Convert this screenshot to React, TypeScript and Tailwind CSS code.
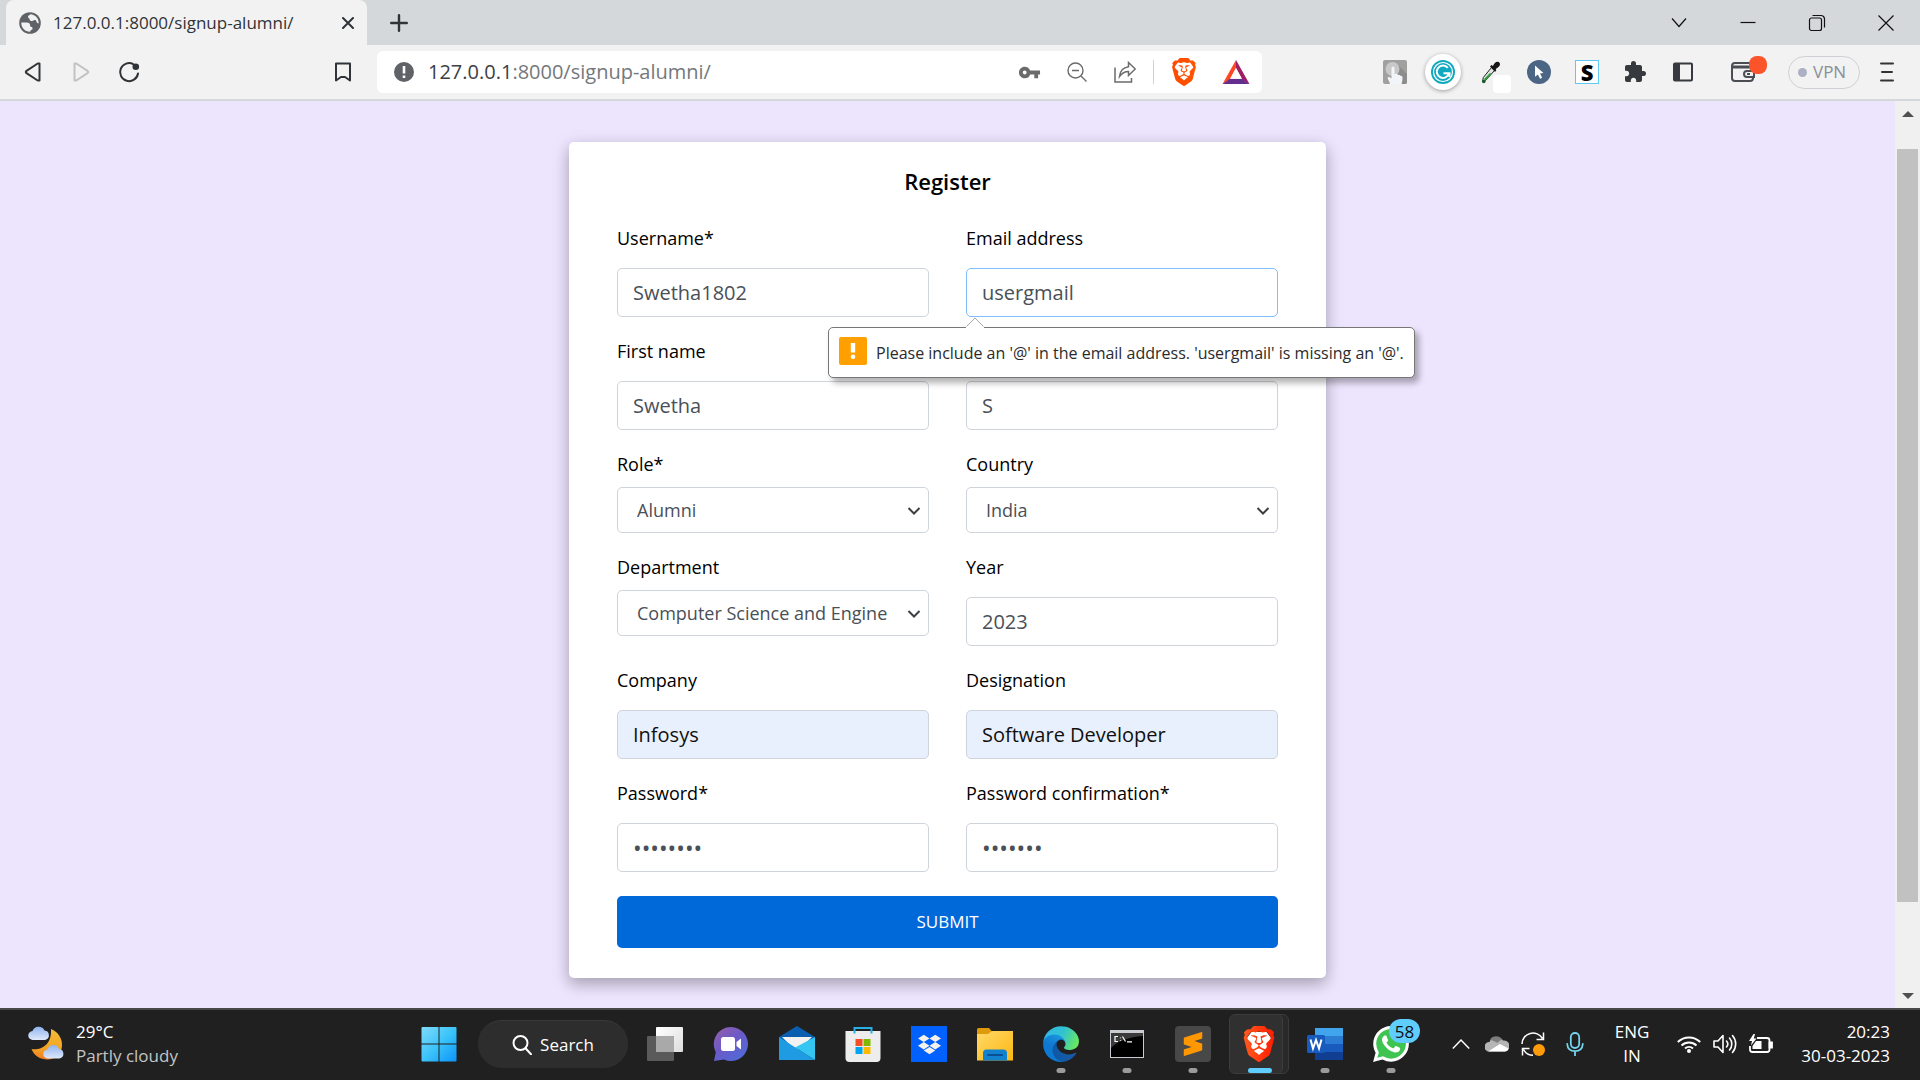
import React from 'react';
import { MdExtension, MdVpnKey } from 'react-icons/md';
import { SiBrave, SiDropbox, SiSublimetext, SiWhatsapp } from 'react-icons/si';

type FieldProps = {
  id: string;
  label?: string;
  value: string;
  type?: string;
  tone?: 'normal' | 'focused' | 'autofill';
  children?: React.ReactNode;
};

const tones = {
  normal: 'border-[#ced4da] bg-white text-[#495057]',
  focused: 'border-[#80bdff] bg-white text-[#495057]',
  autofill: 'border-[#ced4da] bg-[#e8f0fe] text-[#101010]',
};

function Field({ id, label, value, type = 'text', tone = 'normal', children }: FieldProps) {
  return (
    <div className="flex min-w-0 flex-col justify-end">
      {label && <label htmlFor={id} className="block text-[18px] leading-7 text-black">{label}</label>}
      <div className="relative mt-4">
        <input
          id={id}
          type={type}
          defaultValue={value}
          aria-label={label ? undefined : 'Last name'}
          className={`block h-[49px] w-full rounded-[5px] border px-[15px] leading-7 outline-none ${type === 'password' ? 'text-[23px]' : 'text-[20px]'} ${tones[tone]}`}
        />
        {children}
      </div>
    </div>
  );
}

function SelectField({ id, label, value }: { id: string; label: string; value: string }) {
  return (
    <div className="min-w-0">
      <label htmlFor={id} className="block text-[18px] leading-7 text-black">{label}</label>
      <div className="relative mt-[9px]">
        <select
          id={id}
          defaultValue={value}
          className="block h-[46px] w-full appearance-none rounded-[5px] border border-[#ced4da] bg-white pl-[19px] pr-10 text-[18px] leading-7 text-[#495057] outline-none"
        >
          <option>{value}</option>
        </select>
        <svg className="pointer-events-none absolute right-2 top-5 h-2 w-[14px]" viewBox="0 0 14 8" fill="none" stroke="#3b4045" strokeWidth="2">
          <path d="M1.5 1l5.5 5.5L12.5 1" />
        </svg>
      </div>
    </div>
  );
}

function ValidationTip() {
  return (
    <div className="absolute -left-[138px] top-full z-10 mt-[10px] w-[587px]" role="alert">
      <div className="flex h-[51px] items-center rounded-[5px] border border-[#777] bg-white pl-[10px] pr-2 shadow-[4px_5px_6px_rgba(0,0,0,0.3)]">
        <svg className="mb-1 h-7 w-7 shrink-0" viewBox="0 0 28 28">
          <rect width="28" height="28" rx="2" fill="#ffa000" />
          <rect x="11.800" y="6" width="4.400" height="9.500" fill="#fff" />
          <circle cx="14" cy="19.800" r="2.300" fill="#fff" />
        </svg>
        <span className="ml-[9px] whitespace-nowrap text-[16px] leading-6 text-[#2b2b2b]">
          Please include an '@' in the email address. 'usergmail' is missing an '@'.
        </span>
      </div>
      <svg className="absolute -top-[10px] left-[138px] h-[11px] w-[18px]" viewBox="0 0 18 11">
        <path d="M0 10L9 1l9 9v1H0z" fill="#fff" />
        <path d="M0.500 9.500L9 1l8.500 8.500" fill="none" stroke="#a8a8a8" />
      </svg>
    </div>
  );
}

/* ---------- browser chrome ---------- */

function WindowButton({ label, children }: { label: string; children: React.ReactNode }) {
  return (
    <button aria-label={label} className="flex h-full w-[69px] items-center justify-center">
      <svg className="h-4 w-4 overflow-visible" viewBox="0 0 16 16" fill="none" stroke="#111" strokeWidth="1.200">{children}</svg>
    </button>
  );
}

function ToolButton({ label, children }: { label: string; children: React.ReactNode }) {
  return (
    <button aria-label={label} className="flex h-full w-12 shrink-0 items-center justify-center">{children}</button>
  );
}

function BraveLion({ id, size, from, to }: { id: string; size: string; from: string; to: string }) {
  return (
    <svg className={size} viewBox="0 0 24 24">
      <defs>
        <linearGradient id={id} x1="0" y1="0" x2="1" y2="0">
          <stop offset="0" stopColor={from} />
          <stop offset="1" stopColor={to} />
        </linearGradient>
      </defs>
      <path d="M7 4h10l3 4-3 10-5 4-5-4L4 8z" fill="#fff" />
      <SiBrave size={24} fill={`url(#${id})`} />
    </svg>
  );
}

function TabStrip() {
  return (
    <header className="flex h-[45px] items-center bg-[#d4d8db] pl-1.5">
      <div className="flex h-full w-[361px] items-center rounded-t-lg bg-[#f2f2f2] pl-[13px] pr-2">
        <svg className="h-[22px] w-[22px] shrink-0" viewBox="0 0 22 22">
          <circle cx="11" cy="11" r="10.800" fill="#5f6368" />
          <path d="M2.300 10.500h5.200c2.600 0 3.600 1.200 3.600 3 0 1.200 1 1.700 2.300 1.700v2.200c-1.200.1-2 .8-2.200 2.300C6 19.800 2.200 15.800 2.300 10.500z" fill="#f2f2f2" />
          <path d="M11.300 2.200c-.7 1.200-1.900 1-2.300 2.400-.3 1.500 1.500 1.500 1.700 2.900.2 1.600 2.600 2 3.600.9 1-.9 2.900-.6 3.100.8.200 1.300 1 2.200 2.300 2.300C20 6.500 16.500 2.500 11.300 2.200z" fill="#f2f2f2" />
        </svg>
        <span className="ml-3 whitespace-nowrap text-[17px] leading-6 text-[#303438]">127.0.0.1:8000/signup-alumni/</span>
        <button aria-label="Close tab" className="ml-auto flex h-6 w-[22px] items-center justify-center">
          <svg className="h-3 w-3" viewBox="0 0 12 12" stroke="#303438" strokeWidth="2" strokeLinecap="round"><path d="M1 1l10 10M11 1L1 11" /></svg>
        </button>
      </div>
      <button aria-label="New tab" className="ml-4 flex h-8 w-8 items-center justify-center">
        <svg className="h-[18px] w-[18px]" viewBox="0 0 18 18" stroke="#303438" strokeWidth="2.400" strokeLinecap="round"><path d="M9 1.200v15.600M1.200 9h15.600" /></svg>
      </button>
      <div className="ml-auto flex h-full">
        <WindowButton label="Search tabs"><path d="M1 3.500l7 8 7-8" /></WindowButton>
        <WindowButton label="Minimize"><path d="M0.500 7.500h15" /></WindowButton>
        <WindowButton label="Restore"><rect x="0.500" y="3" width="12" height="12.500" rx="2" /><path d="M3.500 0.500H12a3.500 3.500 0 0 1 3.500 3.500v8.500" /></WindowButton>
        <WindowButton label="Close"><path d="M0.500 0.500l15 15M15.500 0.500l-15 15" /></WindowButton>
      </div>
    </header>
  );
}

function Toolbar() {
  return (
    <nav className="flex h-14 items-center border-b-2 border-[#d4d8db] bg-[#f2f2f2] pl-[9px] pr-[21px]">
      <ToolButton label="Back">
        <svg className="h-5 w-5" viewBox="0 0 20 20" fill="none" stroke="#303438" strokeWidth="2" strokeLinejoin="round"><path d="M16.500 1.500v17h-1.800L3.500 11.200a1.400 1.400 0 0 1 0-2.400L14.700 1.500z" /></svg>
      </ToolButton>
      <ToolButton label="Forward">
        <svg className="h-5 w-5" viewBox="0 0 20 20" fill="none" stroke="#c0c2c4" strokeWidth="2" strokeLinejoin="round"><path d="M3.500 1.500v17h1.800l11.200-7.300a1.400 1.400 0 0 0 0-2.400L5.300 1.500z" /></svg>
      </ToolButton>
      <ToolButton label="Reload">
        <svg className="h-[22px] w-[22px]" viewBox="0 0 22 22" fill="none" stroke="#303438" strokeWidth="2" strokeLinecap="round"><path d="M15.500 3.300A9 9 0 1 0 20 12.500" /><circle cx="17.800" cy="5.800" r="3.300" fill="#303438" stroke="none" /></svg>
      </ToolButton>
      <div className="ml-[166px] h-full">
        <ToolButton label="Bookmark">
          <svg className="h-5 w-4" viewBox="0 0 16 20" fill="none" stroke="#303438" strokeWidth="2" strokeLinejoin="round"><path d="M1 1.500h14v17l-5-3.500h-4L1 18.500z" /></svg>
        </ToolButton>
      </div>

      <div className="ml-[10px] mr-[109px] flex h-[42px] min-w-0 flex-1 items-center rounded-md bg-white pl-[17px]">
        <svg className="h-5 w-5 shrink-0" viewBox="0 0 20 20"><circle cx="10" cy="10" r="10" fill="#5f6368" /><rect x="8.700" y="4" width="2.600" height="7.500" fill="#fff" /><rect x="8.700" y="13.500" width="2.600" height="2.500" fill="#fff" /></svg>
        <div className="ml-3.5 min-w-0 flex-1 whitespace-nowrap text-[20px] leading-7 text-[#74787c]">
          <span className="text-[#3c4043]">127.0.0.1</span>:8000/signup-alumni/
        </div>
        <ToolButton label="Passwords"><MdVpnKey className="h-[23px] w-[23px]" color="#6b6b6b" /></ToolButton>
        <ToolButton label="Zoom out">
          <svg className="h-5 w-5" viewBox="0 0 20 20" fill="none" stroke="#6b6b6b" strokeWidth="1.400"><circle cx="8.500" cy="8.500" r="7.500" /><path d="M5 8.500h7M14 14l5.500 5.500" /></svg>
        </ToolButton>
        <ToolButton label="Share">
          <svg className="h-[22px] w-[22px]" viewBox="0 0 22 22" fill="none" stroke="#6b6b6b" strokeWidth="1.500"><path d="M1 6.500V21h16.500v-4" /><path d="M14.500 1.500L21.300 8l-6.800 6.500v-4c-4 0-6.500 1.500-9 5 .5-5.500 3.500-9 9-9.800z" /></svg>
        </ToolButton>
        <span className="mx-1 h-6 w-px bg-[#cfd1d4]" />
        <button aria-label="Brave Shields" className="flex h-full w-[52px] items-center justify-center">
          <BraveLion id="lion-bar" size="h-7 w-7" from="#ff4a00" to="#ff5500" />
        </button>
        <button aria-label="Brave Rewards" className="flex h-full w-[52px] items-center justify-center">
          <svg className="h-6 w-7" viewBox="0 0 28 24">
            <path d="M14 0L0.500 24l7.500-4.500L14 8z" fill="#ff4724" />
            <path d="M14 0l13.500 24-7.500-4.500L14 8z" fill="#9e1f63" />
            <path d="M0.500 24h27L20 18.800H8z" fill="#662d91" />
            <path d="M14 8l6 10.800H8z" fill="#fff" />
          </svg>
        </button>
      </div>

      <ToolButton label="Touch extension">
        <svg className="h-6 w-6" viewBox="0 0 24 24">
          <rect width="24" height="24" rx="2" fill="#a0a0a0" />
          <path d="M14 4l10 10v8a2 2 0 0 1-2 2H8z" fill="#8c8c8c" />
          <circle cx="9.500" cy="9" r="7" fill="#c8c8c8" />
          <path d="M8.500 8a1.500 1.500 0 0 1 3 0v6c2-.5 3 .2 3.500 1 1-.5 2 0 2.300.8 1-.3 2.200.2 2.200 1.500 0 3-.3 4.700-1 6.700H7c-.4-2.500-2-4-2.500-6.500 1-1 2.500-.5 4 1z" fill="#f1f5fa" />
        </svg>
      </ToolButton>
      <ToolButton label="Grammarly">
        <span className="flex h-9 w-9 items-center justify-center rounded-full bg-white shadow-[0_1px_4px_rgba(0,0,0,0.35)]">
          <svg className="h-6 w-6" viewBox="0 0 24 24" fill="none">
            <circle cx="12" cy="12" r="12" fill="#11a9c0" />
            <circle cx="12" cy="12" r="9.500" stroke="#fff" strokeWidth="1.200" />
            <path d="M16.800 7.800A6.200 6.200 0 1 0 18 13.200M12.500 13.200H18.500v3.800" stroke="#fff" strokeWidth="2" />
          </svg>
        </span>
      </ToolButton>
      <ToolButton label="Color picker">
        <span className="relative block h-6 w-6">
          <svg className="ml-0.5 h-6 w-5" viewBox="0 0 20 24">
            <path d="M10.500 7.500l3 3-8.500 9.500-3.500 2 .8-4.500z" fill="#dfe8df" stroke="#222" strokeWidth="1" />
            <path d="M9 13l1.500.8-5.500 6.400-2 .8.500-2.500z" fill="#2e9e3a" />
            <circle cx="2.800" cy="21.500" r="1.800" fill="#1c5b2a" />
            <path d="M9 6.500l1.500-1.500 1.500 1c1-2.500 2.500-4.300 4.500-4.300 2.200 0 3 2 2.200 3.800-.8 1.500-2.500 2.500-4 3.500l.6 1.300-1.300 1.700z" fill="#161616" />
          </svg>
          <span className="absolute -bottom-[9px] -right-2 h-[18px] w-[18px] rounded-sm bg-white" />
        </span>
      </ToolButton>
      <ToolButton label="Cursor extension">
        <svg className="h-6 w-6" viewBox="0 0 24 24"><circle cx="12" cy="12" r="12" fill="#4b6584" /><path d="M8 5.500l8.500 7.500-3.500.4 2.200 4.300-2.200 1.100-2.100-4.400L8 16.700z" fill="#fff" /></svg>
      </ToolButton>
      <ToolButton label="S extension">
        <span className="flex h-6 w-6 items-center justify-center border border-[#5fc9f3] bg-white text-[22px] font-extrabold leading-none text-black">S</span>
      </ToolButton>
      <ToolButton label="Extensions"><MdExtension className="h-6 w-6" color="#36393d" /></ToolButton>
      <ToolButton label="Side panel">
        <svg className="h-5 w-5" viewBox="0 0 20 20"><rect x="1" y="1.500" width="18" height="17" rx="1" fill="none" stroke="#36393d" strokeWidth="2" /><path d="M1 1h6v18H1z" fill="#36393d" /></svg>
      </ToolButton>
      <button aria-label="Wallet" className="relative ml-[21px] flex h-full w-[30px] shrink-0 items-center justify-center">
        <svg className="h-[22px] w-6" viewBox="0 0 24 22" fill="none" stroke="#4a4d52" strokeWidth="2"><rect x="1" y="2" width="21" height="18" rx="3" /><path d="M1 6h21" strokeWidth="3" /><path d="M23 10h-7a3 3 0 0 0 0 6h7z" fill="#f2f2f2" /><path d="M16 13h3" /></svg>
        <span className="absolute -right-[9px] top-[11px] h-[18px] w-[18px] rounded-lg bg-[#fb542b]" />
      </button>
      <button className="ml-[30px] flex h-[33px] w-[72px] shrink-0 items-center rounded-full border border-[#cdd0d5] pl-[9px] text-[17px] leading-6 text-[#8a8f98]">
        <span className="mr-1.5 h-[9px] w-[9px] rounded-full bg-[#adafc4]" />VPN
      </button>
      <button aria-label="Menu" className="ml-[15px] flex h-full w-6 shrink-0 items-center justify-center">
        <svg className="h-5 w-[14px]" viewBox="0 0 14 20" stroke="#303438" strokeWidth="2" strokeLinecap="round"><path d="M1 1.500h12M2 10h10M1 18.500h12" /></svg>
      </button>
    </nav>
  );
}

function Scrollbar() {
  return (
    <div className="flex w-[25px] shrink-0 flex-col items-center bg-[#f0f0f0]">
      <span className="flex h-[25px] items-center justify-center"><svg className="h-1.5 w-3" viewBox="0 0 12 6"><path d="M6 0l6 6H0z" fill="#505050" /></svg></span>
      <span className="mb-[81px] mt-[23px] w-[21px] flex-1 bg-[#c1c1c1]" />
      <span className="flex h-[25px] items-center justify-center"><svg className="h-1.5 w-3" viewBox="0 0 12 6"><path d="M6 6l6-6H0z" fill="#505050" /></svg></span>
    </div>
  );
}

/* ---------- taskbar ---------- */

function WeatherIcon() {
  return (
    <svg className="h-9 w-[38px]" viewBox="0 0 38 36">
      <defs>
        <linearGradient id="moon" x1="0" y1="0" x2="0" y2="1"><stop offset="0" stopColor="#f2bd3b" /><stop offset="0.600" stopColor="#f5a623" /><stop offset="1" stopColor="#ef7d22" /></linearGradient>
        <linearGradient id="cloud" x1="0" y1="0" x2="0" y2="1"><stop offset="0" stopColor="#8fb4ef" /><stop offset="1" stopColor="#dfe9fa" /></linearGradient>
      </defs>
      <path d="M23 3c7 3 11.500 9 11 17-.6 8-7 13.500-14.500 13.500C12 33.500 6 29.500 3.500 23 12 24.500 24 20 23 3z" fill="url(#moon)" />
      <path d="M5 14a4.500 4.500 0 0 1-.5-9A6.500 6.500 0 0 1 16.500 4.500a4.800 4.800 0 0 1 .5 9.500z" fill="url(#cloud)" />
      <path d="M20 32.500a4.500 4.500 0 0 1-.5-9A6 6 0 0 1 31 23a4.800 4.800 0 0 1 .5 9.500z" fill="url(#cloud)" />
    </svg>
  );
}

function TaskIcon({ label, running, children }: { label: string; running?: boolean; children: React.ReactNode }) {
  return (
    <button aria-label={label} className="relative flex h-full w-[66px] shrink-0 items-center justify-center">
      {children}
      {running && <span className="absolute bottom-[5px] left-1/2 h-[5px] w-[9px] -translate-x-1/2 rounded-full bg-[#9b9b9b]" />}
    </button>
  );
}

function TaskIcons() {
  return (
    <>
      <TaskIcon label="Task view">
        <svg className="h-9 w-9" viewBox="0 0 36 36"><defs><linearGradient id="tv" x1="0" y1="0" x2="1" y2="1"><stop offset="0" stopColor="#fff" /><stop offset="1" stopColor="#ddd" /></linearGradient></defs><rect x="9" y="1" width="27" height="25" rx="1" fill="url(#tv)" /><rect y="10" width="27" height="25" rx="1" fill="#5a5a5a" /><path d="M9 10h17a1 1 0 0 1 1 1v15H9z" fill="#a9a9a9" /></svg>
      </TaskIcon>
      <TaskIcon label="Chat">
        <svg className="h-9 w-9" viewBox="0 0 36 36"><defs><linearGradient id="chat" x1="0" y1="0" x2="0.800" y2="1"><stop offset="0" stopColor="#9a5fa8" /><stop offset="0.500" stopColor="#6a5ac8" /><stop offset="1" stopColor="#4f6bd8" /></linearGradient></defs><path d="M18 1a17 17 0 1 1-7 32.500L1 35l1.800-9A17 17 0 0 1 18 1z" fill="url(#chat)" /><rect x="8" y="11" width="14" height="14" rx="2.500" fill="#fff" /><path d="M23.500 16l4.500-3.500v11L23.500 20z" fill="#fff" /></svg>
      </TaskIcon>
      <TaskIcon label="Mail">
        <svg className="h-9 w-9" viewBox="0 0 36 36"><path d="M0 11L18 0l18 11v6H0z" fill="#0a5eb0" /><path d="M3 11h30l-12 12h-6z" fill="#f2f2f2" /><path d="M36 11v23L16 21.500z" fill="#35c5f1" /><path d="M0 34V11l36 23z" fill="#1f9be4" /></svg>
      </TaskIcon>
      <TaskIcon label="Microsoft Store">
        <svg className="h-9 w-9" viewBox="0 0 36 36"><path d="M.500 5h35v27a4 4 0 0 1-4 4h-27a4 4 0 0 1-4-4z" fill="#ededed" /><path d="M9.500 7.500V2h17v5.500" fill="none" stroke="#27b0e6" strokeWidth="2" /><path d="M10.500 13h7v7h-7z" fill="#f25022" /><path d="M18.500 13h7v7h-7z" fill="#7fba00" /><path d="M10.500 21h7v7h-7z" fill="#00a4ef" /><path d="M18.500 21h7v7h-7z" fill="#ffb900" /></svg>
      </TaskIcon>
      <TaskIcon label="Dropbox">
        <span className="flex h-9 w-9 items-center justify-center bg-[#0061ff]"><SiDropbox className="h-[23px] w-[23px]" color="#f5f2ee" /></span>
      </TaskIcon>
      <TaskIcon label="File Explorer">
        <svg className="h-9 w-9" viewBox="0 0 36 36"><defs><linearGradient id="fold" x1="0" y1="0" x2="1" y2="1"><stop offset="0" stopColor="#ffd869" /><stop offset="1" stopColor="#fdb813" /></linearGradient></defs><path d="M0 3.500A1.500 1.500 0 0 1 1.500 2H12l3 3.500V12H0z" fill="#dd9b0b" /><path d="M0 8h11l4-3h21v29.500H0z" fill="url(#fold)" /><path d="M6 34.500V27a3.500 3.500 0 0 1 3.500-3.500h17A3.500 3.500 0 0 1 30 27v7.500z" fill="#1282cf" /><path d="M11 29h14" stroke="#0a4f94" strokeWidth="2" strokeLinecap="round" /></svg>
      </TaskIcon>
      <TaskIcon label="Edge" running>
        <svg className="h-9 w-9" viewBox="4 4 257 257">
          <defs>
            <linearGradient id="e1" x1="0" y1="0" x2="1" y2="0"><stop offset="0" stopColor="#0c59a4" /><stop offset="1" stopColor="#1a5aa8" /></linearGradient>
            <linearGradient id="e2" x1="0.700" y1="0" x2="0.300" y2="1"><stop offset="0" stopColor="#1b9de2" /><stop offset="0.500" stopColor="#0f78d0" /><stop offset="1" stopColor="#0b7ad6" /></linearGradient>
            <linearGradient id="e3" x1="0" y1="0.300" x2="1" y2="0.600"><stop offset="0" stopColor="#33b6e6" /><stop offset="0.500" stopColor="#30c3d2" /><stop offset="1" stopColor="#6ae85c" /></linearGradient>
          </defs>
          <path d="M235.680 195.460a93.730 93.730 0 0 1-10.540 4.710 101.870 101.870 0 0 1-35.900 6.460c-47.320 0-88.540-32.550-88.540-74.320A31.480 31.480 0 0 1 117.130 105c-42.800 1.800-53.800 46.400-53.800 72.530 0 73.880 68.090 81.370 82.760 81.370 7.910 0 19.840-2.300 27-4.560l1.310-.440a128.340 128.340 0 0 0 66.600-52.800 4 4 0 0 0-5.320-5.640Z" fill="url(#e1)" />
          <path d="M110.340 246.340A79.200 79.200 0 0 1 87.600 225a80.720 80.720 0 0 1 29.530-120c3.120-1.470 8.450-4.130 15.540-4a32.350 32.350 0 0 1 25.690 13 31.880 31.880 0 0 1 6.360 18.660c0-.210 24.460-79.600-80-79.600-43.900 0-80 41.660-80 78.210a130.150 130.150 0 0 0 12.110 56 128 128 0 0 0 156.380 67.110 75.550 75.550 0 0 1-62.780-8Z" fill="url(#e2)" />
          <path d="M156.940 153.780c-.810 1.050-3.300 2.500-3.300 5.660 0 2.610 1.700 5.120 4.720 7.230 14.380 10 41.490 8.680 41.560 8.680a59.560 59.560 0 0 0 30.270-8.350 61.380 61.380 0 0 0 30.430-52.880c.260-22.410-8-37.310-11.340-43.910C228.090 28.760 182.350 4.920 132.610 4.920a128 128 0 0 0-128 126.200c.480-36.540 36.800-66.050 80-66.050 3.500 0 23.460.340 42 10.070 16.340 8.580 24.900 18.940 30.850 29.210 6.180 10.670 7.280 24.150 7.280 29.520s-2.740 13.330-7.800 19.910Z" fill="url(#e3)" />
        </svg>
      </TaskIcon>
      <TaskIcon label="Command Prompt" running>
        <span className="relative block h-7 w-[34px] border border-[#c9cdd2] border-t-[3px] bg-black">
          <svg className="absolute inset-0 h-full w-full" viewBox="0 0 32 24" fill="none"><path d="M0 0h32v3C16 4 6 9 0 15z" fill="#3a3a3a" /><path d="M7 3.500H4v5h3M9.500 4.500v.8M9.500 7v.8M11.500 3.500l3 5M16 8.800h5" stroke="#fff" strokeWidth="1.200" /></svg>
        </span>
      </TaskIcon>
      <TaskIcon label="Sublime Text" running>
        <span className="flex h-9 w-9 items-center justify-center rounded-sm bg-[#484848]"><SiSublimetext className="h-6 w-6" color="#ff9800" /></span>
      </TaskIcon>
      <button aria-label="Brave" className="relative flex h-full w-[66px] shrink-0 items-center">
        <span className="absolute left-2 top-1 h-[60px] w-[55px] rounded-md border border-[#3a3a3a] bg-[#292929]" />
        <span className="relative ml-[3px] flex h-[60px] w-[54px] items-center justify-center rounded-md border border-[#3c3c3c] bg-[#303030] pl-1.5">
          <BraveLion id="lion-task" size="h-9 w-9" from="#ff5a1f" to="#ff1c00" />
          <span className="absolute bottom-0 right-2.5 h-[5px] w-6 rounded-full bg-[#60cdff]" />
        </span>
      </button>
      <TaskIcon label="Word" running>
        <svg className="h-9 w-9" viewBox="0 0 36 36"><path d="M8 2h28v8H8z" fill="#41a5ee" /><path d="M8 10h28v8H8z" fill="#2b7cd3" /><path d="M8 18h28v8H8z" fill="#185abd" /><path d="M8 26h28v8H8z" fill="#103f91" /><rect y="9" width="18" height="18" rx="1.500" fill="#185abd" /><path d="M3.500 13.500l2.500 9 3-8.500 3 8.500 2.500-9" fill="none" stroke="#fff" strokeWidth="2" /></svg>
      </TaskIcon>
      <TaskIcon label="WhatsApp" running>
        <svg className="h-9 w-9" viewBox="0 0 24 24"><path d="M12 1a11 11 0 1 1-5.500 20.500L1 23l1.500-5.500A11 11 0 0 1 12 1z" fill="#3fc351" /><SiWhatsapp size={24} color="#fff" /></svg>
        <span className="absolute right-1 top-[9px] flex h-6 w-[31px] items-center justify-center rounded-full bg-[#60cdff] text-[17px] leading-none text-[#101010]">58</span>
      </TaskIcon>
    </>
  );
}

function TrayCell({ width = 'w-9', children }: { width?: string; children: React.ReactNode }) {
  return <span className={`flex h-full shrink-0 items-center justify-center ${width}`}>{children}</span>;
}

function Taskbar() {
  return (
    <footer className="flex h-[72px] items-center border-t-2 border-[#48484a] bg-[#202020] pb-0.5 pr-[30px] text-[17px] leading-6 text-white">
      <div className="flex w-[406px] shrink-0 items-center pl-7">
        <WeatherIcon />
        <div className="ml-2.5"><div>29°C</div><div className="text-[#c4c4c4]">Partly cloudy</div></div>
      </div>
      <button aria-label="Start" className="flex h-full w-[66px] shrink-0 items-center justify-center">
        <svg className="h-9 w-9" viewBox="0 0 36 36"><defs><linearGradient id="win" gradientUnits="userSpaceOnUse" x1="0" y1="0" x2="36" y2="36"><stop offset="0" stopColor="#84dcfb" /><stop offset="0.500" stopColor="#3cc4fa" /><stop offset="1" stopColor="#0a93f8" /></linearGradient></defs><path d="M.500 2a1 1 0 0 1 1-1H17.500v16.500H.500zM18.500 1H34.500a1 1 0 0 1 1 1v15.500H18.500zM.500 18.500H17.500V35.500h-16a1 1 0 0 1-1-1zM18.500 18.500h17V34.500a1 1 0 0 1-1 1H18.500z" fill="url(#win)" /></svg>
      </button>
      <button className="ml-1.5 mr-1 flex h-12 w-[150px] shrink-0 items-center justify-center rounded-full border-t border-[#393939] bg-[#2d2d2d] text-white">
        <svg className="mr-2 h-5 w-5" viewBox="0 0 20 20" fill="none" stroke="#fff" strokeWidth="2" strokeLinecap="round"><circle cx="8.500" cy="8" r="7" /><path d="M13.500 13.200l5.500 6" /></svg>
        Search
      </button>
      <TaskIcons />

      <div className="ml-auto flex h-full items-center">
        <TrayCell><svg className="h-3 w-[18px]" viewBox="0 0 18 12" fill="none" stroke="#fff" strokeWidth="1.500"><path d="M.800 10.500L9 2l8.200 8.500" /></svg></TrayCell>
        <TrayCell><svg className="h-4 w-6" viewBox="0 0 24 16"><path d="M4 15.500A4.500 4.500 0 0 1 4.500 6 7.500 7.500 0 0 1 18 4.500a5.500 5.500 0 0 1 2 11z" fill="#b5b5b5" /><path d="M5 3.500C8-.500 14-1 17.500 3.800c-2 .2-3 1-5 3z" fill="#7d7d7d" /><path d="M3 15.500l12-7.500 8.500 4.500c-.5 2-1.500 3-4 3z" fill="#fff" /></svg></TrayCell>
        <TrayCell>
          <svg className="h-6 w-6" viewBox="0 0 24 24" fill="none" stroke="#fff" strokeWidth="1.500"><path d="M1 12A11 11 0 0 1 21.500 6.500M22.500.500V7.500H15.500M12 23.200A11 11 0 0 1 2.500 17.500M1.500 23.500V16.500H8.500" /><circle cx="18" cy="18" r="6" fill="#ff9a0a" stroke="none" /></svg>
        </TrayCell>
        <TrayCell width="w-12"><svg className="h-6 w-[18px]" viewBox="0 0 18 24" fill="none" stroke="#76d3ee" strokeWidth="1.800" strokeLinecap="round"><rect x="4.800" y="1" width="8.400" height="15" rx="4.200" /><path d="M1.200 12c.4 4.800 3.400 7.200 7.800 7.200s7.400-2.400 7.800-7.200M9 19.500V23.500" /></svg></TrayCell>
        <TrayCell width="w-[66px]"><span className="text-center">ENG<br />IN</span></TrayCell>
        <span className="w-1.5" />
        <TrayCell><svg className="h-[18px] w-6" viewBox="0 0 24 18" fill="none" stroke="#fff" strokeWidth="2"><path d="M.800 7a16 16 0 0 1 22.400 0M4.500 10.500a11 11 0 0 1 15 0M8 13.500a6 6 0 0 1 8 0" /><circle cx="12" cy="16" r="2" fill="#fff" stroke="none" /></svg></TrayCell>
        <TrayCell><svg className="h-5 w-6" viewBox="0 0 24 20" fill="none" stroke="#fff" strokeWidth="1.600" strokeLinejoin="round" strokeLinecap="round"><path d="M1 7h4l5-5.500v17L5 13H1z" /><path d="M13.500 7a4.500 4.500 0 0 1 0 6M16.500 4a9 9 0 0 1 0 12M19.500 1.500a13 13 0 0 1 0 17" /></svg></TrayCell>
        <TrayCell><svg className="h-5 w-6" viewBox="0 0 24 20" fill="none" stroke="#fff" strokeWidth="1.800"><path d="M8 4h10a2.500 2.500 0 0 1 2.500 2.500v9A2.500 2.500 0 0 1 18 18H3.500A2.500 2.500 0 0 1 1 15.500V12" /><path d="M20.500 8.500h2.500v5h-2.500z" fill="#fff" /><path d="M7 7h5.500v8H3.500v-3z" fill="#fff" stroke="none" /><path d="M4.500 0L0 7h3l-1 4.500L7.500 4.500H4.800L6 0z" fill="#fff" stroke="none" /></svg></TrayCell>
        <div className="w-[111px] text-right">20:23<br />30-03-2023</div>
      </div>
    </footer>
  );
}

export default function App() {
  return (
    <div className="flex min-h-screen flex-col font-['Open_Sans','Noto_Sans',sans-serif]">
      <TabStrip />
      <Toolbar />
      <div className="flex flex-1">
        <main className="min-w-0 flex-1 bg-[#ede4fd] px-6 pb-[30px] pt-[41px]">
          <form
            onSubmit={(e) => e.preventDefault()}
            noValidate
            className="mx-auto max-w-[757px] rounded-[5px] bg-white px-12 pb-[30px] pt-6 shadow-[0_6px_14px_rgba(0,0,0,0.18),0_5px_19px_rgba(0,0,0,0.15)]"
          >
            <h1 className="mb-7 text-center text-[22px] font-semibold leading-[30px] text-black">Register</h1>
            <div className="grid grid-cols-2 gap-x-[37px] gap-y-5">
              <Field id="username" label="Username*" value="Swetha1802" />
              <Field id="email" label="Email address" value="usergmail" type="email" tone="focused"><ValidationTip /></Field>
              <Field id="first-name" label="First name" value="Swetha" />
              <Field id="last-name" value="S" />
              <SelectField id="role" label="Role*" value="Alumni" />
              <SelectField id="country" label="Country" value="India" />
              <SelectField id="department" label="Department" value="Computer Science and Engineering" />
              <Field id="year" label="Year" value="2023" />
              <Field id="company" label="Company" value="Infosys" tone="autofill" />
              <Field id="designation" label="Designation" value="Software Developer" tone="autofill" />
              <Field id="password" label="Password*" value="password" type="password" />
              <Field id="password-confirmation" label="Password confirmation*" value="passwor" type="password" />
            </div>
            <button type="submit" className="mt-6 block h-[52px] w-full rounded-[5px] bg-[#0069d9] text-[17px] leading-6 text-white">SUBMIT</button>
          </form>
        </main>
        <Scrollbar />
      </div>
      <Taskbar />
    </div>
  );
}
